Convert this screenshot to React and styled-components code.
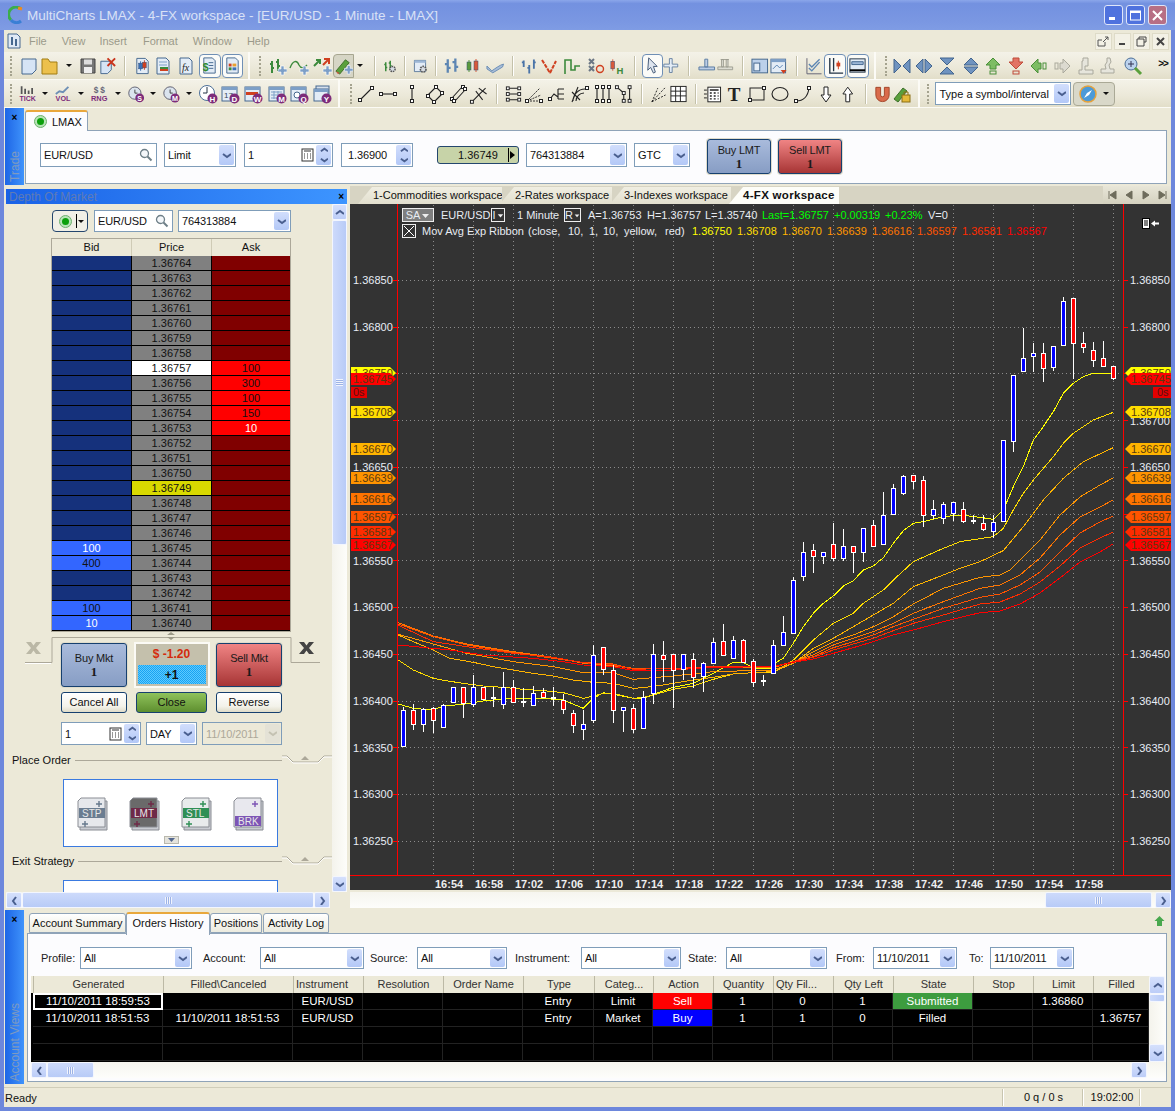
import React from 'react';
import styled, { createGlobalStyle } from 'styled-components';

const GlobalStyle = createGlobalStyle`
  html, body { margin: 0; padding: 0; background: #ece9d8; }
  body { font-family: 'Liberation Sans', Arial, sans-serif; font-size: 11px; color: #111; }
  * { box-sizing: border-box; }
`;

/* ---------- window frame ---------- */
const Win = styled.div` width: 1175px; height: 1111px; display: flex; flex-direction: column; overflow: hidden; `;
const TitleBar = styled.div` height: 30px; flex: none; display: flex; align-items: center; padding: 0 8px; color: #d9e1f6; font-size: 13.5px; background: linear-gradient(#8ba6ea, #7391e0 12%, #7a97e2 70%, #7f9ce4); `;
const TitleText = styled.span` margin-left: 3px; flex: 1; `;
const CapBtn = styled.div` width: 19px; height: 20px; margin-left: 3px; border: 1px solid #dfe6fa; border-radius: 3px; background: ${p => p.$red ? '#b76f85' : '#4f72de'}; display: flex; align-items: center; justify-content: center; `;
const Body = styled.div` flex: 1; display: flex; flex-direction: column; border: 4px solid #6d87dc; border-top: 0; min-height: 0; background: #ece9d8; `;

const MenuBar = styled.div` height: 22px; flex: none; display: flex; align-items: center; color: #9b9a8a; font-size: 11px; padding-left: 3px; `;
const MenuItem = styled.span` margin-left: ${p => p.$ml}px; `;
const MdiBtns = styled.div` margin-left: auto; margin-right: 2px; display: flex; gap: 2px; `;
const MdiBtn = styled.div` width: 17px; height: 17px; background: #f3f1e6; border: 1px solid #dedbc8; display: flex; align-items: center; justify-content: center; `;

const ToolRow = styled.div` height: 28px; flex: none; display: flex; align-items: center; background: linear-gradient(#f4f2e8, #ebe8d8 60%, #e2dec9); border-bottom: 1px solid #fbfaf4; `;
const Slot = styled.div` flex: none; height: 26px; display: flex; align-items: center; justify-content: center; `;
const ActiveBox = styled.div` width: 22px; height: 24px; border: 1px solid #6f8fb5; border-radius: 4px; background: #fbfbf8; display: flex; align-items: center; justify-content: center; `;
const PencilBox = styled.div` width: 21px; height: 24px; border: 1px solid #a7a690; border-radius: 4px 0 0 4px; background: #d6d5c5; display: flex; align-items: center; justify-content: center; `;
const Caret = styled.div` width: 0; height: 0; border-left: 3px solid transparent; border-right: 3px solid transparent; border-top: 3px solid #111; `;
const Sep = styled.div` width: 1px; height: 20px; background: #c4c1aa; box-shadow: 1px 0 #fff; `;
const Grip = styled.div` width: 2px; height: 20px; border-left: 2px dotted #a5a38f; `;
const EndBar = styled.div` width: 2px; height: 28px; background: #fcfbf6; `;
const Overflow = styled.div` font-size: 10px; font-weight: bold; letter-spacing: -1px; align-self: flex-start; margin-top: 5px; `;
const SymbolCombo = styled.div` width: 136px; height: 23px; margin-left: 4px; background: #fff; border: 1px solid #7f9db9; display: flex; align-items: center; padding-left: 4px; font-size: 11px; `;
const SymbolBtn = styled.div` width: 42px; height: 24px; margin-left: 2px; border: 1px solid #aaa996; border-radius: 4px; background: #d9d8c9; display: flex; align-items: center; justify-content: space-around; padding: 0 2px; `;

/* ---------- docks ---------- */
const Strip = styled.div` width: 19px; flex: none; margin-left: 1px; background: linear-gradient(90deg, #1e66e6, #3f93fb); color: #7f9ac0; display: flex; flex-direction: column; align-items: center; padding-top: 6px; `;
const StripClose = styled.div` color: #000; font-weight: bold; font-size: 10px; line-height: 8px; `;
const StripLabel = styled.div` margin-top: auto; margin-bottom: 3px; writing-mode: vertical-rl; transform: rotate(180deg); font-size: 12px; `;
const TradeDock = styled.div` height: 77px; flex: none; display: flex; `;
const TradeMain = styled.div` flex: 1; margin: 1px 4px 1px 1px; display: flex; flex-direction: column; `;
const TabRow = styled.div` display: flex; height: ${p => p.$h}px; align-items: flex-end; flex: none; padding-left: ${p => p.$pl || 0}px; `;
const LmaxTab = styled.div` width: 63px; height: 21px; margin-bottom: -1px; z-index: 1; background: #fcfcfe; border: 1px solid #8fa3b8; border-bottom: 0; border-top: 2px solid #e9a83c; border-radius: 3px 3px 0 0; display: flex; align-items: center; gap: 5px; padding-left: 8px; font-size: 11px; `;
const TradePanel = styled.div` flex: 1; background: #fcfcfe; border: 1px solid #8fa3b8; display: flex; align-items: flex-start; padding: 12px 0 0 14px; `;
const Field = styled.div` width: ${p => p.$w}px; height: ${p => p.$h || 24}px; margin-left: ${p => p.$ml || 0}px; flex: none; background: ${p => p.$off ? '#ece9d8' : '#fff'}; color: ${p => p.$off ? '#aca899' : '#111'}; border: 1px solid #7f9db9; display: flex; align-items: center; padding-left: 3px; overflow: hidden; font-size: 11px; letter-spacing: -.1px; `;
const FieldText = styled.span` flex: 1; white-space: nowrap; `;
const DropBtn = styled.div` width: 15px; align-self: stretch; margin: 1px; flex: none; background: ${p => p.$off ? '#e4e2d6' : 'linear-gradient(#d2defc, #b3c8f7)'}; border-radius: 2px; display: flex; align-items: center; justify-content: center; `;
const SpinBtn = styled.div` width: 15px; align-self: stretch; margin: 1px; flex: none; background: linear-gradient(#d2defc, #b3c8f7); border-radius: 2px; display: flex; flex-direction: column; align-items: center; justify-content: space-around; `;
const LastPrice = styled.div` width: 82px; height: 18px; margin: 3px 0 0 24px; flex: none; border: 1px solid #24466e; border-radius: 3px; background: #c7d3a8; display: flex; align-items: center; padding-left: 20px; font-size: 11px; `;
const LastPriceTail = styled.span` margin-left: auto; margin-right: 3px; border-left: 1px solid #000; padding-left: 1px; display: flex; align-items: center; height: 14px; `;
const SideBtn = styled.div` width: ${p => p.$w}px; height: ${p => p.$h}px; margin-left: ${p => p.$ml || 0}px; flex: none; margin-top: ${p => p.$mt || 0}px; border: 1px solid #16406f; border-radius: 3px; color: #1a1a1a; text-align: center; display: flex; flex-direction: column; justify-content: center; background: ${p => p.$sell ? 'linear-gradient(#f08484, #a73535)' : 'linear-gradient(#a9bbdc, #879dc4)'}; font-size: 11px; letter-spacing: -.2px; line-height: 14px; box-shadow: 0 0 0 1px #e0dccb; `;
const SideQty = styled.b` font-family: 'Liberation Serif', serif; font-size: 13px; `;

/* ---------- depth of market ---------- */
const Workspace = styled.div` height: 722px; flex: none; margin-top: 1px; display: flex; `;
const DomPanel = styled.div` width: 344px; flex: none; display: flex; flex-direction: column; padding: 3px 1px 0 2px; `;
const DomHead = styled.div` height: 15px; flex: none; background: linear-gradient(90deg, #1a62e6, #3d95ff); color: #5f7bb5; font-size: 12px; display: flex; align-items: center; justify-content: space-between; padding: 0 3px; `;
const DomRow = styled.div` flex: 1; display: flex; min-height: 0; `;
const DomContent = styled.div` width: 326px; flex: none; overflow: hidden; padding: 6px 0 0 46px; `;
const DomTop = styled.div` display: flex; width: 239px; height: 22px; `;
const ConnBtn = styled.div` width: 36px; height: 22px; border: 1px solid #24466e; border-radius: 4px; background: #f0efe6; display: flex; align-items: center; justify-content: space-between; padding: 0 3px 0 6px; `;
const ConnDivider = styled.div` display: flex; align-items: center; gap: 1px; border-left: 1px solid #000; height: 14px; padding-left: 1px; `;
const DomTable = styled.div` width: 240px; margin: 6px 0 0 -1px; border: 1px solid #aca899; background: #000; `;
const DomHeader = styled.div` height: 17px; display: grid; grid-template-columns: 79px 80px 79px; background: #ece9d8; text-align: center; line-height: 17px; font-size: 11px; border-bottom: 1px solid #ece9d8; `;
const DomHeaderCell = styled.div` border-left: ${p => p.$first ? 0 : '1px solid #cfcbb6'}; `;
const DomLine = styled.div` height: 15px; display: grid; grid-template-columns: 79px 80px 79px; border-bottom: 1px solid #000; `;
const DomCell = styled.div` background: ${p => p.$bg}; color: ${p => p.$fg || '#111'}; border-left: ${p => p.$first ? 0 : '1px solid #000'}; text-align: center; font-size: 11px; line-height: 14px; `;
const Tray = styled.div` position: relative; width: 239px; height: 55px; margin-top: 5px; padding: 5px 9px 0; display: flex; justify-content: space-between; `;
const TrayLine = styled.svg` position: absolute; left: -30px; top: -6px; `;
const TrayClose = styled.div` position: absolute; top: 5px; left: ${p => p.$left}px; line-height: 0; `;
const PnlBox = styled.div` position: relative; width: 76px; height: 46px; background: #c4c0ac; border: 2px solid #fbfaf5; display: flex; flex-direction: column; align-items: center; padding-top: 3px; `;
const PnlValue = styled.b` color: #d42a0c; font-size: 12px; line-height: 15px; `;
const PnlBar = styled.div` width: 68px; height: 19px; margin-top: 3px; text-align: center; font-weight: bold; font-size: 12px; line-height: 20px; background: repeating-conic-gradient(#19a3f2 0 25%, #5ccaff 0 50%) 0 0 / 2px 2px; `;
const ActionRow = styled.div` display: flex; width: 221px; margin-left: 9px; justify-content: space-between; `;
const ActionBtn = styled.div` width: ${p => p.$w}px; height: 21px; border: 1px solid #16406f; border-radius: 3px; text-align: center; line-height: 19px; font-size: 11px; background: ${p => p.$green ? 'linear-gradient(#8fc25b, #5e8f2f)' : 'linear-gradient(#fff, #f3f2ea 70%, #dfdcc8)'}; `;
const OrderRow = styled.div` display: flex; margin: 9px 0 0 9px; `;
const SectionTitle = styled.div` display: flex; align-items: center; margin: ${p => p.$mt}px 0 0 -40px; width: 320px; height: 14px; font-size: 11px; `;
const SectionRule = styled.div` flex: 1; height: 1px; margin-left: 4px; background: #aca899; `;
const OrderBox = styled.div` position: relative; width: 215px; height: ${p => p.$h}px; margin: ${p => p.$mt}px 0 0 11px; background: #fff; border: 1px solid #3a7ae0; display: flex; align-items: flex-start; padding: 17px 0 0 13px; gap: 20px; `;
const MoreBtn = styled.div` position: absolute; left: 100px; bottom: 2px; width: 15px; height: 8px; background: #e4e3dc; border: 1px solid #b9b8ad; display: flex; align-items: center; justify-content: center; `;

/* ---------- scroll bars ---------- */
const VScrollBar = styled.div` width: ${p => p.$w || 15}px; flex: none; display: flex; flex-direction: column; background: linear-gradient(90deg, #f4f3ec, #fdfdfa); `;
const HScrollBar = styled.div` height: 16px; flex: none; display: flex; width: ${p => p.$w ? p.$w + 'px' : 'auto'}; margin-top: ${p => p.$mt || 0}px; background: linear-gradient(#f6f5ef, #fdfdfb); `;
const ScrollBtn = styled.div` width: ${p => p.$w || 16}px; height: ${p => p.$h || 16}px; flex: none; margin-right: ${p => p.$mr || 0}px; background: linear-gradient(#d5e0fc, #bccdf8); border: 1px solid #f3f6fe; border-radius: 2px; display: flex; align-items: center; justify-content: center; `;
const Thumb = styled.div` background: linear-gradient(${p => p.$v ? '90deg' : '180deg'}, #cddafb, #b8cbf7); border: 1px solid #f3f6fe; border-radius: 2px; flex: ${p => p.$grow ? 1 : 'none'}; width: ${p => p.$w ? p.$w + 'px' : 'auto'}; height: ${p => p.$h ? p.$h + 'px' : 'auto'}; margin-left: ${p => p.$ml || 0}px; display: flex; align-items: center; justify-content: center; `;
const ThumbGrip = styled.div` width: 7px; height: 7px; background: ${p => p.$v ? 'repeating-linear-gradient(#f1f4fd 0 1px, #9db3e6 1px 2px)' : 'repeating-linear-gradient(90deg, #f1f4fd 0 1px, #9db3e6 1px 2px)'}; `;
const Fill = styled.div` flex: 1; `;

/* ---------- chart side ---------- */
const ChartCol = styled.div` width: 821px; margin-left: 2px; flex: none; display: flex; flex-direction: column; `;
const WsTabs = styled.div` height: 18px; flex: none; display: flex; align-items: flex-end; background: #d7d4c3; padding-left: 8px; `;
const WsTab = styled.div` width: ${p => p.$w}px; height: 17px; margin-right: -2px; flex: none; padding-left: ${p => p.$pl}px; line-height: 17px; white-space: nowrap; font-size: ${p => p.$on ? 11.5 : 11}px; letter-spacing: ${p => p.$on ? '.3px' : 0}; font-weight: ${p => p.$on ? 'bold' : 'normal'}; background: ${p => p.$on ? '#fdfdf8' : 'linear-gradient(#f0eee2, #e2dfce)'}; clip-path: polygon(14px 0, 100% 0, 100% 100%, 0 100%); z-index: ${p => p.$on ? 1 : 0}; `;
const WsNav = styled.div` margin-left: auto; width: 68px; height: 18px; display: flex; align-items: center; justify-content: space-around; background: linear-gradient(#e8e6d8, #d4d1bf); `;
const ChartFrame = styled.div` position: relative; height: 686px; flex: none; background: #333; `;
const ChartSvg = styled.svg` display: block; text { font-family: 'Liberation Sans', Arial, sans-serif; font-size: 11px; } `;
const Legend = styled.div` position: absolute; left: 52px; top: 4px; display: flex; flex-direction: column; gap: 2px; color: #e8ecf2; font-size: 11px; white-space: nowrap; `;
const LegendLine = styled.div` display: flex; align-items: center; height: 14px; `;
const LegendBox = styled.span` display: inline-flex; align-items: center; justify-content: center; gap: 1px; height: 14px; width: ${p => p.$w}px; flex: none; margin: ${p => p.$m || 0}; border: 1px solid #eee; background: ${p => p.$gray ? '#7f7f7f' : 'transparent'}; `;
const LegendText = styled.span` color: ${p => p.$c || '#e8ecf2'}; width: ${p => p.$w ? p.$w + 'px' : 'auto'}; flex: none; `;
const CollapseIcon = styled.div` position: absolute; right: 11px; top: 14px; `;

/* ---------- account views ---------- */
const AccountDock = styled.div` height: 174px; flex: none; margin-top: 2px; display: flex; `;
const AccountMain = styled.div` flex: 1; margin: 0 4px 2px 3px; display: flex; flex-direction: column; `;
const AccTab = styled.div` width: ${p => p.$w}px; height: ${p => p.$on ? 23 : 20}px; margin-bottom: ${p => p.$on ? -2 : 0}px; margin-left: ${p => p.$ml || 0}px; flex: none; border: 1px solid #8fa3b8; border-bottom: ${p => p.$on ? 0 : '1px solid #8fa3b8'}; border-top: ${p => p.$on ? '2px solid #e9a83c' : '1px solid #8fa3b8'}; border-radius: 3px 3px 0 0; background: ${p => p.$on ? '#fcfcfe' : 'linear-gradient(#fff, #ecebdf)'}; text-align: center; line-height: 19px; font-size: 11px; z-index: ${p => p.$on ? 1 : 0}; `;
const UpArrow = styled.div` margin-left: auto; margin-right: 2px; align-self: center; `;
const AccPanel = styled.div` flex: 1; background: #fcfcfe; border: 1px solid #8fa3b8; display: flex; flex-direction: column; padding: 13px 0 0 3px; min-height: 0; `;
const FilterRow = styled.div` display: flex; align-items: center; height: 22px; flex: none; color: #222; `;
const FilterLabel = styled.span` width: ${p => p.$w}px; flex: none; padding-left: ${p => p.$pl || 0}px; font-size: 11px; white-space: nowrap; `;
const GridWrap = styled.div` display: flex; margin-top: 7px; height: 86px; flex: none; --cols: 130px 130px 70px 80px 80px 71px 59px 60px 60px 60px 60px 80px 60px 60px 56px; `;
const Grid = styled.div` width: 1118px; flex: none; background: #000; `;
const GridHead = styled.div` height: 17px; display: grid; grid-template-columns: var(--cols); padding-left: 2px; background: #ece9d8; line-height: 17px; font-size: 11px; color: #333; `;
const HeadCell = styled.div` border-left: 1px solid #bcb9a5; text-align: ${p => p.$left ? 'left' : 'center'}; padding-left: ${p => p.$left ? 2 : 0}px; white-space: nowrap; overflow: hidden; `;
const GridRow = styled.div` height: 17px; display: grid; grid-template-columns: var(--cols); padding-left: 2px; `;
const GridCell = styled.div` border: ${p => p.$sel ? '2px solid #fff' : 0}; border-right: ${p => p.$sel ? '2px solid #fff' : '1px solid #222'}; border-bottom: ${p => p.$sel ? '2px solid #fff' : '1px solid #222'}; background: ${p => p.$bg || '#000'}; color: #fff; text-align: center; font-size: 11.5px; line-height: ${p => p.$sel ? 13 : 16}px; white-space: nowrap; `;

/* ---------- status bar ---------- */
const StatusBar = styled.div` height: 20px; flex: none; margin-top: 3px; display: flex; align-items: center; font-size: 11px; border-top: 1px solid #d0cdb9; background: #ece9d8; `;
const StatusCell = styled.div` height: 17px; border-left: 1px solid #fff; box-shadow: -1px 0 #c8c5b0; width: ${p => p.$w}px; text-align: center; line-height: 17px; flex: none; `;

/* ---------- icons ---------- */
const S = '#46688f';
const LABEL = { fontSize: 8, fontWeight: 'bold', fontFamily: 'Liberation Sans' };
const Page = () => <path d="M4 2h9l3 3v13H4z" fill="#e3ecf6" stroke={S} />;
const Ball = ({ l }) => (<g><circle cx="14.5" cy="14.5" r="5" fill="#7d2c7a" /><text x="14.5" y="17.5" textAnchor="middle" fill="#fff" style={LABEL}>{l}</text></g>);
const Plus = () => <path d="M14 10h3v3h3v3h-3v3h-3v-3h-3v-3h3z" fill="#7d9fc7" stroke="#fff" strokeWidth=".6" />;
const Gear = () => <circle cx="14" cy="14" r="3.5" fill="#d8dde3" stroke="#555" strokeWidth="2" strokeDasharray="2 1" />;
const Cnd = ({ x, t, b, c }) => (<g><path d={`M${x} ${t - 2}V${b + 2}`} stroke={c} /><rect x={x - 2} y={t} width="4" height={b - t} fill={c} stroke="#33507a" strokeWidth=".5" /></g>);
const Seg = ({ d }) => <path d={d} fill="none" stroke="#222" strokeWidth="1.1" />;
const Dot = ({ x, y }) => <rect x={x - 1.5} y={y - 1.5} width="3" height="3" fill="#fff" stroke="#222" />;
const Tri = ({ d, c }) => <path d={d} fill={c} stroke="#43658e" />;
const Bars3 = ({ c = S }) => <path d="M5 5v12M3 8h2M5 12h2M11 3v12M9 6h2M11 10h2" fill="none" stroke={c} strokeWidth="2" />;
const Lbl = ({ t }) => (<g><path d="M3 1v9M7 4v6M11 6v4M15 3v7" stroke="#555" strokeWidth="2" /><text x="10" y="18" textAnchor="middle" fill="#7d2c7a" style={LABEL}>{t}</text></g>);
const CalBase = () => <g><rect x="2" y="3" width="15" height="14" fill="#e3ecf6" stroke={S} /><path d="M2 3h15v3H2z" fill="#7d9fc7" /></g>;

const ICONS = {
  newWin: <path d="M3 3h14v11l-4 4H3z" fill="#d6e4f5" stroke={S} />,
  open: <path d="M3 3h6l2 3h7v12H3z" fill="#ecc04c" stroke="#a17d12" />,
  save: <g><path d="M3 3h14v14H3z" fill="#777" stroke="#444" /><rect x="6" y="3.5" width="8" height="5" fill="#ddd" /><rect x="6" y="11" width="8" height="6" fill="#eee" /></g>,
  del: <g><path d="M3 5h11v9l-4 4H3z" fill="#d6e4f5" stroke={S} /><path d="M10 2l8 8M18 2l-8 8" stroke="#c9341c" strokeWidth="2" /></g>,
  chartDoc: <g><Page /><Cnd x={8} t={7} b={13} c="#3a6fb5" /><Cnd x={12} t={6} b={12} c="#d04020" /></g>,
  gridDoc: <g><Page /><path d="M6 6h8M6 9h8" stroke="#7d9fc7" /><rect x="7" y="11" width="8" height="2" fill="#3c8a3c" /><rect x="7" y="13" width="8" height="2" fill="#d04020" /></g>,
  fx: <g><Page /><text x="6" y="15" fill="#222" style={{ fontSize: 10, fontStyle: 'italic', fontFamily: 'Liberation Serif' }}>fx</text></g>,
  dollarDoc: <g><Page /><path d="M9 7h5M9 10h5M9 13h5" stroke={S} /><text x="3" y="16" fill="#2f8a2f" style={{ fontSize: 11, fontWeight: 'bold', fontFamily: 'Liberation Sans' }}>$</text></g>,
  tableDoc: <g><Page /><path d="M6 8h3v3H6z" fill="#d04020" /><path d="M10 8h4v3h-4z" fill="#e8a030" /><path d="M6 12h3v3H6z" fill="#3c8a3c" /><path d="M10 12h4v3h-4z" fill="#3a6fb5" /></g>,
  addBars: <g><Bars3 c="#3c8a3c" /><Plus /></g>,
  addWave: <g><path d="M1 12c3-8 7-8 9-3 2 4 5 3 8 0" fill="none" stroke="#3c8a3c" strokeWidth="1.4" /><Plus /></g>,
  addArrow: <g><path d="M2 10l5-5M4 4h4v4" fill="none" stroke="#3c8a3c" strokeWidth="2" /><path d="M11 9l5-5M12 3h5v5" fill="none" stroke="#d04020" strokeWidth="2" /><Plus /></g>,
  pencilPlus: <g><path d="M2 16l10-12 4 3-10 12z" fill="#5aa03c" stroke="#3d6f2a" /><path d="M2 16l2 3 2-1z" fill="#d0503c" /><Plus /></g>,
  gearBars: <g><Bars3 c="#3c8a3c" /><Gear /></g>,
  gearWin: <g><path d="M3 3h14v14H3z" fill="#e3ecf6" stroke={S} /><path d="M3 3h14v3H3z" fill="#9db7d6" /><Gear /></g>,
  bars: <path d="M5 3v14M2 8h3M5 12h3M13 2v14M10 6h3M13 11h3" fill="none" stroke="#5d86b3" strokeWidth="2.4" />,
  candles: <g><Cnd x={6} t={6} b={14} c="#5a9a3c" /><Cnd x={13} t={5} b={14} c="#d85a3c" /></g>,
  check: <path d="M2 10l5 5c3-2 8-6 12-7l-1 3-10 6-6-4z" fill="#a8bdd8" stroke="#6d8fb5" />,
  hlcBlue: <path d="M4 4v7M10 9v9M15 3v10M2 6h2M8 12h2M15 6h2" fill="none" stroke="#4a74a8" strokeWidth="2" />,
  hlcRed: <path d="M3 4l5 8 3 5M11 17l6-12" fill="none" stroke="#d04020" strokeWidth="2" strokeDasharray="4 1" />,
  hlcGreen: <path d="M3 18V4h6v10h4v-4h5" fill="none" stroke="#3c8a3c" strokeWidth="1.6" />,
  pf: <g><path d="M3 3l5 5M8 3l-5 5M3 10l5 5M8 10l-5 5" stroke="#6b7684" strokeWidth="2" /><circle cx="14" cy="13" r="3.5" fill="none" stroke="#d04020" strokeWidth="1.4" /></g>,
  candleH: <g><Cnd x={5} t={5} b={13} c="#d85a3c" /><text x="9" y="18" fill="#3c8a3c" style={{ fontSize: 10, fontWeight: 'bold', fontFamily: 'Liberation Sans' }}>H</text></g>,
  cursor: <path d="M6 2l9 9h-4l2 6-2 1-3-6-3 3z" fill="#dde4ee" stroke="#455b78" />,
  cross: <path d="M8 2h3v6h6v3h-6v6H8v-6H2V8h6z" fill="#e3ecf6" stroke="#65809f" />,
  hline: <path d="M2 11h16v3H2zM8 3h3v8H8z" fill="#bccde5" stroke="#5d7da3" />,
  hlineG: <path d="M2 11h16v3H2zM6 3h2v8H6zM11 3h2v8h-2zM5 3h9" fill="#dcdcd2" stroke="#9c9c90" />,
  panel: <g><rect x="2" y="3" width="16" height="14" fill="#bcd0ea" stroke={S} /><rect x="4" y="7" width="6" height="8" fill="#e7eff8" stroke={S} /></g>,
  chartWin: <g><CalBase /><path d="M4 13l4-4 3 3 3-3" fill="none" stroke="#5c86b3" /><path d="M12 14l6 0-3 4z" fill="#d04020" /></g>,
  checkChart: <g><path d="M3 2v16h15" fill="none" stroke="#667" /><path d="M5 12l3 3 8-9M5 8l3 3 8-8" fill="none" stroke="#5d86b3" strokeWidth="1.4" /></g>,
  axisCandle: <g><path d="M4 2v16h14M8 2v14" fill="none" stroke="#234" strokeWidth="1.4" /><path d="M13 5v9" stroke="#d04020" /><rect x="11" y="7" width="4" height="4" fill="#d04020" /></g>,
  panelStack: <g><rect x="2" y="3" width="16" height="14" fill="#e3ecf6" stroke="#234" /><path d="M4 6h12v3H4z" fill="#9db7d6" stroke={S} /><path d="M2 15h16" stroke="#000" strokeWidth="2" /></g>,
  stepStart: <g><Tri d="M2 3l7 7-7 7z" c="#6f93c0" /><Tri d="M18 3l-7 7 7 7z" c="#6f93c0" /></g>,
  stepIn: <g><Tri d="M9 3l-7 7 7 7z" c="#6f93c0" /><Tri d="M11 3l7 7-7 7z" c="#6f93c0" /></g>,
  stepV: <g><Tri d="M3 2h14l-7 7z" c="#6f93c0" /><Tri d="M3 18h14l-7-7z" c="#6f93c0" /></g>,
  stepV2: <g><Tri d="M10 2l7 7H3z" c="#6f93c0" /><Tri d="M10 18l7-7H3z" c="#6f93c0" /></g>,
  upG: <g><path d="M10 2l7 7h-4v4H7V9H3z" fill="#7dbd63" stroke="#4b8f3a" /><rect x="7" y="15" width="6" height="3" fill="none" stroke="#4b8f3a" /></g>,
  downR: <g><path d="M10 13l7-7h-4V2H7v4H3z" fill="#e27364" stroke="#bf4a38" /><rect x="7" y="15" width="6" height="3" fill="none" stroke="#bf4a38" /></g>,
  leftG: <g><path d="M2 10l7-7v4h3v6H9v4z" fill="#7dbd63" stroke="#4b8f3a" /><rect x="14" y="7" width="3" height="6" fill="none" stroke="#4b8f3a" /></g>,
  rightG: <g><path d="M18 10l-7-7v4H8v6h3v4z" fill="#dcdad0" stroke="#aaa99c" /><rect x="3" y="7" width="3" height="6" fill="none" stroke="#aaa99c" /></g>,
  jumpG: <path d="M7 2h5v8h-3v4h8v4H3v-4h3V5H7z" fill="#e6e5dc" stroke="#a9a89c" />,
  jumpG2: <path d="M9 2h3l1 4-2 3 1 4h4v4H3v-4h5l-1-4 2-3z" fill="#e6e5dc" stroke="#a9a89c" />,
  zoom: <g><circle cx="8" cy="8" r="6" fill="#bcd3ee" stroke="#4c6f98" /><path d="M5 8h6M8 5v6" stroke="#335" /><path d="M12 12l6 6" stroke="#5aa03c" strokeWidth="3" /></g>,
  tick: <Lbl t="TICK" />,
  vol: <g><path d="M2 10l4-3 4 1 6-6" fill="none" stroke="#6d8fb5" strokeWidth="2" /><text x="10" y="18" textAnchor="middle" fill="#7d2c7a" style={LABEL}>VOL</text></g>,
  rng: <g><text x="4" y="9" fill="#667" style={{ fontSize: 9, fontWeight: 'bold', fontFamily: 'Liberation Sans' }}>$</text><text x="11" y="9" fill="#667" style={{ fontSize: 9, fontWeight: 'bold', fontFamily: 'Liberation Sans' }}>$</text><text x="10" y="18" textAnchor="middle" fill="#7d2c7a" style={LABEL}>RNG</text></g>,
  clockS: <g><circle cx="9" cy="9" r="7" fill="#dbe4ee" stroke="#556" /><path d="M9 5v4h3" stroke="#333" fill="none" /><Ball l="S" /></g>,
  clockM: <g><circle cx="9" cy="9" r="7" fill="#dbe4ee" stroke="#556" /><path d="M9 5v4h3" stroke="#333" fill="none" /><Ball l="M" /></g>,
  clockH: <g><circle cx="9" cy="9" r="7.5" fill="#fff" stroke="#4c6f98" /><path d="M9 3v6H5" stroke="#234" fill="none" /><Ball l="H" /></g>,
  calD: <g><CalBase /><text x="4" y="14" fill="#345" style={{ fontSize: 8, fontFamily: 'Liberation Sans' }}>17</text><Ball l="D" /></g>,
  calW: <g><CalBase /><rect x="3" y="8" width="12" height="3" fill="#d04020" /><Ball l="W" /></g>,
  calM: <g><CalBase /><path d="M4 8h11M4 11h11M4 14h8M7 7v8M11 7v8" stroke="#7d9fc7" /><Ball l="M" /></g>,
  calQ: <g><CalBase /><circle cx="8" cy="11" r="3" fill="#fff" stroke={S} /><Ball l="Q" /></g>,
  calY: <g><rect x="4" y="2" width="13" height="12" fill="#d6e0ec" stroke={S} /><rect x="2" y="5" width="14" height="12" fill="#e3ecf6" stroke={S} /><path d="M2 5h14v3H2z" fill="#7d9fc7" /><Ball l="Y" /></g>,
  line: <g><Seg d="M4 16L16 4" /><Dot x={4} y={16} /><Dot x={16} y={4} /></g>,
  ray: <g><Seg d="M3 10h14" /><Dot x={3} y={10} /><Dot x={17} y={10} /></g>,
  vline: <g><Seg d="M10 3v14" /><Dot x={10} y={3} /><Dot x={10} y={17} /></g>,
  channel: <g><Seg d="M2 12L11 3M9 18l9-9M3 12l6 6M11 3l6 6" /><Dot x={3} y={12} /><Dot x={11} y={3} /><Dot x={9} y={18} /><Dot x={17} y={9} /></g>,
  channel2: <g><Seg d="M4 14L14 3M7 17L17 6" /><Dot x={4} y={15} /><Dot x={15} y={3} /><Dot x={6} y={17} /><Dot x={17} y={5} /></g>,
  fork: <g><Seg d="M3 18L10 11M10 11l7-7M7 7l7 9M10 4l8 6" /><Dot x={3} y={18} /></g>,
  levels: <g><Seg d="M4 4h12M4 10h12M4 16h12" /><Dot x={4} y={4} /><Dot x={16} y={4} /><Dot x={4} y={10} /><Dot x={16} y={10} /><Dot x={4} y={16} /><Dot x={16} y={16} /></g>,
  fan: <g><path d="M3 17L16 4M3 17l14-6M3 17h15" fill="none" stroke="#333" strokeDasharray="2 1" /><Dot x={3} y={17} /><Dot x={17} y={17} /></g>,
  fibExt: <g><Seg d="M3 15l4-5 4 3M11 5h6M11 10h6M11 15h6M11 5v10" /><Dot x={3} y={15} /></g>,
  arcs: <g><Seg d="M3 17A12 12 0 0 1 15 5M6 17A8 8 0 0 1 14 9M2 8l8 8M8 3l-6 15" /><Dot x={17} y={4} /></g>,
  triple: <g><Seg d="M4 3v14M10 3v14M16 3v14" /><Dot x={4} y={3} /><Dot x={10} y={3} /><Dot x={16} y={3} /><Dot x={4} y={17} /><Dot x={10} y={17} /><Dot x={16} y={17} /></g>,
  triple2: <g><Seg d="M3 3l7 6M10 9v8M16 3v14" /><Dot x={3} y={3} /><Dot x={10} y={9} /><Dot x={16} y={3} /><Dot x={10} y={17} /><Dot x={16} y={17} /></g>,
  dashFan: <path d="M3 18L17 3M3 18l6-14M3 18l14-7" fill="none" stroke="#222" strokeDasharray="2 1.5" />,
  hash: <g><rect x="2" y="2" width="16" height="16" fill="#fff" stroke="#222" /><path d="M7 2v16M12 2v16M2 7h16M2 12h16" stroke="#222" /></g>,
  calc: <g><path d="M1 6h3M1 10h3M1 14h3" stroke="#222" /><rect x="5" y="3" width="13" height="15" fill="#fff" stroke="#222" /><path d="M7 6h9M7 9h2M11 9h2M15 9h1M7 12h2M11 12h2M15 12h1M7 15h2M11 15h2M15 15h1" stroke="#222" strokeWidth="1.5" /></g>,
  textT: <text x="10" y="17" textAnchor="middle" fill="#222" style={{ fontSize: 19, fontWeight: 'bold', fontFamily: 'Liberation Serif' }}>T</text>,
  rect: <g><rect x="3" y="4" width="14" height="12" fill="none" stroke="#222" /><Dot x={3} y={16} /><Dot x={17} y={4} /></g>,
  oval: <ellipse cx="10" cy="10" rx="8" ry="6.5" fill="none" stroke="#222" strokeWidth="1.1" />,
  curve: <g><Seg d="M3 17c8 0 12-5 13-13" /><Dot x={3} y={17} /><Dot x={16} y={4} /></g>,
  arrowD: <path d="M8 3h4v8h3l-5 7-5-7h3z" fill="#fff" stroke="#222" />,
  arrowU: <path d="M8 18h4v-8h3l-5-7-5 7h3z" fill="#fff" stroke="#222" />,
  magnet: <path d="M3 3h5v8a2 2 0 0 0 4 0V3h5v8a7 7 0 0 1-14 0z" fill="#d96b4b" stroke="#a24428" />,
  pencilLock: <g><path d="M2 15l9-11 4 3-9 11z" fill="#5aa03c" stroke="#3d6f2a" /><rect x="10" y="11" width="8" height="7" fill="#e5b93a" stroke="#8a6f14" /><path d="M12 11V8h4v3" fill="none" stroke="#8a6f14" /></g>,
};

const Ico = ({ name, size = 20 }) => <svg width={size} height={size} viewBox="0 0 20 20">{ICONS[name]}</svg>;
const Chev = ({ d = 'down', c = '#4a5f8f', s = 9 }) => {
  const paths = { down: 'M1 3l4 3 4-3', up: 'M1 6l4-3 4 3', left: 'M6 1L3 5l3 4', right: 'M3 1l3 4-3 4' };
  return <svg width={s} height={s} viewBox="0 0 9 9"><path d={paths[d]} fill="none" stroke={c} strokeWidth="2" /></svg>;
};
const Magnifier = () => <svg width="14" height="14" viewBox="0 0 14 14"><circle cx="5.5" cy="5.5" r="4" fill="#f4f7fa" stroke="#6e7f88" strokeWidth="1.3" /><path d="M8.5 8.5l4 4" stroke="#6e7f88" strokeWidth="2" /></svg>;
const CalcIcon = () => <svg width="14" height="14" viewBox="0 0 14 14"><rect x="1" y="1" width="11" height="12" fill="#fff" stroke="#333" /><path d="M3 3h7M3 6h1M6 6h1M9 6h1M3 8h1M6 8h1M9 8h1M3 10h1M6 10h1M9 10h1" stroke="#333" strokeWidth="1.2" /></svg>;
const Led = () => <svg width="13" height="13" viewBox="0 0 13 13"><circle cx="6.5" cy="6.5" r="6" fill="#b8e4b8" stroke="#6eb06e" /><circle cx="6.5" cy="6.5" r="3.5" fill="#0ba00b" /></svg>;
const XMark = ({ c }) => <svg width="15" height="12" viewBox="0 0 15 12"><path d="M0 0h5l2.500 3.500 2.500-3.500h5l-5 6 5 6h-5l-2.500-3.500-2.500 3.500h-5l5-6z" fill={c} /></svg>;
const TinyDrop = ({ s = 7 }) => <svg width={s} height={s} viewBox="0 0 9 9"><path d="M1 3h7L4.500 7z" fill="#eee" /></svg>;

const Spin = () => <SpinBtn><Chev d="up" s={8} /><Chev d="down" s={8} /></SpinBtn>;
const Drop = ({ off }) => <DropBtn $off={off}><Chev c={off ? '#c4c2b2' : '#4a5f8f'} /></DropBtn>;

/* toolbars: each entry is [icon, centre x]; slot widths come from the centres */
const tb1 = [['grip', 9], ['newWin', 27], ['open', 51], ['caret', 68], ['save', 87], ['del', 109], ['sep', 125], ['chartDoc', 140], ['gridDoc', 163], ['fx', 186], ['dollarDoc', 210, 'on'], ['tableDoc', 233, 'on'], ['end', 252], ['grip', 257], ['addBars', 275], ['addWave', 299], ['addArrow', 322], ['pencilPlus', 346, 'pen'], ['caret', 361], ['sep', 373], ['gearBars', 390], ['sep', 403], ['gearWin', 420], ['sep', 435], ['bars', 450], ['candles', 473], ['check', 497], ['sep', 512], ['hlcBlue', 527], ['hlcRed', 549], ['hlcGreen', 572], ['pf', 596], ['candleH', 619], ['sep', 634], ['cursor', 651, 'on'], ['cross', 673], ['sep', 688], ['hline', 705], ['hlineG', 727], ['sep', 742], ['panel', 757], ['chartWin', 781], ['sep', 796], ['checkChart', 812], ['axisCandle', 835, 'on'], ['panelStack', 859, 'on'], ['end', 878], ['grip', 883], ['stepStart', 901], ['stepIn', 924], ['stepV', 947], ['stepV2', 971], ['upG', 993], ['downR', 1016], ['leftG', 1038], ['rightG', 1062], ['jumpG', 1086], ['jumpG2', 1108], ['zoom', 1131], ['over', 1163]];
const tb2 = [['grip', 9], ['tick', 28], ['caret', 44], ['vol', 64], ['caret', 80], ['rng', 100], ['caret', 117], ['clockS', 136], ['caret', 152], ['clockM', 171], ['caret', 188], ['clockH', 207], ['calD', 230], ['calW', 253], ['calM', 277], ['calQ', 299], ['calY', 322], ['end', 343], ['grip', 347], ['line', 365], ['ray', 388], ['vline', 412], ['channel', 435], ['channel2', 457], ['fork', 481], ['sep', 496], ['levels', 511], ['fan', 534], ['fibExt', 557], ['arcs', 581], ['triple', 602], ['triple2', 626], ['sep', 641], ['dashFan', 657], ['hash', 680], ['sep', 695], ['calc', 711], ['textT', 734], ['rect', 757], ['oval', 780], ['curve', 803], ['arrowD', 826], ['arrowU', 850], ['sep', 865], ['magnet', 880], ['pencilLock', 903], ['end', 923], ['grip', 928]];

const slotWidths = (items, start) => items.map((it, i) => {
  const left = i === 0 ? start : (items[i - 1][1] + it[1]) / 2;
  const right = i === items.length - 1 ? it[1] + (it[1] - left) : (it[1] + items[i + 1][1]) / 2;
  return right - left;
});

const ToolItem = ({ item }) => {
  const [n, , mode] = item;
  if (n === 'grip') return <Grip />;
  if (n === 'sep') return <Sep />;
  if (n === 'end') return <EndBar />;
  if (n === 'caret') return <Caret />;
  if (n === 'over') return <Overflow>&gt;&gt;</Overflow>;
  if (mode === 'on') return <ActiveBox><Ico name={n} size={19} /></ActiveBox>;
  if (mode === 'pen') return <PencilBox><Ico name={n} size={19} /></PencilBox>;
  return <Ico name={n} />;
};

const Toolbar = ({ items, children }) => {
  const widths = slotWidths(items, 4);
  return (
    <ToolRow>
      {items.map((it, i) => <Slot key={i} style={{ width: widths[i] }}><ToolItem item={it} /></Slot>)}
      {children}
    </ToolRow>
  );
};

/* ---------- data ---------- */
const ASKS = { 1.36757: ['100'], 1.36756: ['300'], 1.36755: ['100'], 1.36754: ['150'], 1.36753: ['10', '#fff'] };
const BIDS = { 1.36745: ['100', '#fff'], 1.36744: ['400'], 1.36741: ['100'], 1.36740: ['10', '#fff'] };
const domRows = Array.from({ length: 25 }, (_, i) => +(1.36764 - i * 0.00001).toFixed(5));

const HEADS = [['Generated'], ['Filled\\Canceled'], ['Instrument', 1], ['Resolution'], ['Order Name'], ['Type'], ['Categ...'], ['Action'], ['Quantity'], ['Qty Fil...', 1], ['Qty Left'], ['State'], ['Stop'], ['Limit'], ['Filled']];
const ORDERS = [
  ['11/10/2011 18:59:53', '', 'EUR/USD', '', '', 'Entry', 'Limit', 'Sell', '1', '0', '1', 'Submitted', '', '1.36860', ''],
  ['11/10/2011 18:51:53', '11/10/2011 18:51:53', 'EUR/USD', '', '', 'Entry', 'Market', 'Buy', '1', '1', '0', 'Filled', '', '', '1.36757'],
  Array(15).fill(''), Array(15).fill(''),
];
const cellBg = v => ({ Sell: '#ff0000', Buy: '#0000ff', Submitted: '#3d9c3f' }[v]);

const GRID_Y = [280, 327, 373.7, 420.5, 467, 514, 560.5, 607, 654, 701, 747.5, 794, 841];
const PRICES = ['1.36850', '1.36800', null, null, '1.36650', null, '1.36550', '1.36500', '1.36450', '1.36400', '1.36350', '1.36300', '1.36250'];
const TIMES = ['16:54', '16:58', '17:02', '17:06', '17:10', '17:14', '17:18', '17:22', '17:26', '17:30', '17:34', '17:38', '17:42', '17:46', '17:50', '17:54', '17:58'];

// [kind, wick top, body top, body bottom, wick bottom], read off enlarged crops
const z = (base, rows) => rows.map(r => [r[0], ...r.slice(1).map(v => base + v / 3)]);
const CANDLES = [
  ...z(600, [['b', 320, 330, 440, 440], ['r', 312, 332, 374, 390], ['b', 325, 328, 374, 395], ['r', 322, 325, 362, 398], ['b', 312, 316, 382, 382], ['b', 262, 262, 308, 308], ['r', 262, 262, 310, 354], ['b', 226, 262, 314, 322], ['r', 262, 262, 298, 298], ['w', 262, 292, 298, 320], ['b', 216, 262, 312, 326], ['r', 240, 262, 308, 308], ['w', 264, 304, 306, 322], ['b', 258, 280, 317, 317], ['r', 264, 278, 292, 292], ['w', 262, 292, 294, 318], ['r', 282, 300, 328, 342], ['r', 330, 340, 376, 398], ['b', 330, 373, 388, 420], ['b', 135, 166, 360, 370], ['r', 142, 142, 208, 224], ['r', 195, 212, 332, 368], ['b', 322, 322, 332, 395], ['r', 312, 325, 388, 398], ['b', 272, 292, 385, 385], ['b', 132, 163, 280, 312], ['r', 123, 166, 178, 245], ['r', 163, 163, 210, 324], ['b', 163, 163, 208, 240], ['r', 160, 178, 232, 263], ['b', 185, 190, 230, 275], ['b', 114, 127, 190, 190], ['r', 72, 124, 165, 165], ['b', 108, 121, 176, 176], ['r', 118, 121, 188, 188], ['r', 178, 184, 247, 262]]),
  ...z(460, [['w', 645, 660, 667, 678], ['b', 540, 556, 640, 640], ['b', 468, 517, 556, 556], ['b', 352, 361, 520, 520], ['b', 246, 277, 350, 362], ['r', 252, 271, 290, 338], ['b', 277, 277, 290, 312], ['r', 190, 253, 296, 302], ['b', 207, 259, 296, 302], ['r', 259, 259, 277, 338], ['b', 205, 205, 277, 305], ['r', 180, 196, 260, 262], ['b', 97, 166, 253, 253], ['b', 72, 85, 163, 163], ['b', 46, 49, 101, 105], ['r', 46, 46, 65, 87], ['r', 48, 61, 166, 200], ['b', 120, 148, 166, 178], ['b', 127, 133, 176, 191], ['b', 127, 127, 161, 183], ['r', 127, 148, 184, 188], ['w', 166, 181, 184, 193]]),
  ...z(280, [['r', 705, 730, 748, 752], ['b', 705, 727, 753, 775], ['b', 482, 482, 724, 724], ['b', 286, 286, 484, 515], ['b', 145, 236, 274, 274], ['b', 190, 221, 229, 275], ['r', 190, 221, 265, 305], ['b', 199, 199, 262, 272], ['b', 52, 64, 196, 196], ['r', 56, 56, 190, 298], ['r', 156, 190, 202, 220], ['r', 186, 212, 240, 260], ['r', 183, 236, 260, 260], ['r', 259, 259, 295, 300]]),
];

const pts9 = a => a.map(([x, y]) => [350 + x / 3, 600 + y / 3]);
const pts10 = a => a.map(([x, y]) => [760 + x / 3, 460 + y / 3]);
const pts8 = a => a.map(([x, y]) => [960 + x / 3, 280 + y / 3]);
const RIBBON = [
  ['#ffff00', [...pts9([[145, 312], [190, 325], [250, 330], [280, 318], [340, 313], [400, 303], [460, 297], [520, 296], [580, 295], [640, 300], [700, 325], [730, 295], [760, 278], [800, 285], [850, 295], [880, 296], [910, 283], [970, 262], [1030, 250], [1090, 220], [1150, 187], [1180, 187], [1210, 205], [1270, 205]]), ...pts10([[40, 612], [70, 595], [100, 550], [130, 500], [160, 460], [190, 430], [220, 408], [250, 378], [280, 362], [310, 330], [340, 318], [370, 293], [400, 250], [430, 212], [460, 190], [490, 185], [550, 170], [600, 165], [660, 172]]), ...pts8([[100, 718], [130, 690], [160, 620], [190, 560], [220, 480], [250, 440], [280, 395], [310, 340], [340, 310], [370, 290], [400, 280], [460, 280]])]],
  ['#ffdd00', [...pts9([[145, 180], [190, 210], [250, 235], [280, 241], [340, 250], [400, 258], [460, 262], [520, 268], [580, 272], [640, 278], [700, 295], [760, 280], [800, 283], [850, 295], [880, 292], [910, 285], [970, 268], [1030, 258], [1090, 238], [1150, 222], [1210, 218], [1270, 218]]), ...pts10([[100, 600], [160, 540], [220, 490], [280, 460], [310, 430], [340, 410], [370, 390], [400, 360], [460, 305], [550, 265], [600, 245]]), ...pts8([[100, 770], [130, 745], [160, 690], [190, 640], [220, 600], [250, 565], [280, 530], [310, 490], [340, 460], [400, 420], [460, 397]])]],
  ['#ffb400', [...pts9([[145, 105], [190, 125], [250, 150], [300, 175], [370, 187], [430, 200], [490, 210], [550, 220], [610, 228], [670, 240], [730, 247], [790, 250], [850, 265], [880, 263], [940, 255], [1030, 240], [1090, 232], [1150, 222], [1210, 218], [1270, 215]]), ...pts10([[100, 610], [160, 565], [220, 535], [280, 500], [340, 465], [400, 430], [460, 380], [550, 345], [600, 325], [660, 305]]), ...pts8([[130, 812], [190, 740], [250, 660], [310, 595], [370, 545], [460, 503]])]],
  ['#ff9400', [...pts9([[145, 103], [250, 132], [350, 160], [490, 185], [610, 200], [700, 218], [790, 218], [850, 238], [970, 228], [1090, 215], [1270, 210]]), ...pts10([[100, 610], [160, 575], [220, 545], [280, 525], [340, 500], [400, 470], [460, 432], [550, 385], [660, 352]]), [1000, 575], [1010, 570], [1020, 560], [1040, 540], [1060, 515], [1080, 497], [1100, 485], [1113, 478]]],
  ['#ff7400', [...pts9([[145, 68], [250, 108], [350, 132], [490, 155], [610, 172], [700, 190], [790, 198], [850, 205], [970, 207], [1090, 203], [1270, 203]]), ...pts10([[100, 605], [160, 585], [220, 555], [280, 535], [340, 515], [400, 490], [460, 460], [550, 425], [660, 385]]), [1000, 585], [1020, 575], [1040, 558], [1060, 535], [1080, 517], [1100, 507], [1113, 500]]],
  ['#ff5400', [...pts9([[145, 72], [250, 110], [350, 135], [490, 158], [610, 175], [700, 188], [790, 192], [850, 207], [970, 205], [1090, 200], [1270, 200]]), ...pts10([[100, 605], [160, 590], [220, 563], [280, 545], [340, 525], [400, 500], [460, 478], [550, 445], [660, 412]]), [1000, 594], [1020, 585], [1040, 572], [1060, 552], [1080, 533], [1100, 522], [1113, 516]]],
  ['#ff2c00', [...pts9([[145, 76], [250, 125], [350, 140], [490, 160], [610, 172], [700, 188], [790, 195], [850, 208], [970, 205], [1090, 200], [1270, 200]]), ...pts10([[100, 605], [160, 592], [220, 570], [280, 552], [340, 535], [400, 512], [460, 490], [550, 465], [660, 432]]), [1000, 602], [1020, 594], [1040, 582], [1060, 566], [1080, 548], [1100, 538], [1113, 532]]],
  ['#ff0000', [...pts9([[145, 135], [300, 150], [400, 165], [550, 175], [640, 185], [700, 195], [790, 200], [850, 212], [970, 210], [1090, 202], [1270, 200]]), ...pts10([[100, 607], [160, 597], [220, 580], [280, 563], [340, 545], [400, 525], [460, 510], [550, 485], [660, 458]]), [1000, 611], [1020, 604], [1040, 593], [1060, 578], [1080, 562], [1100, 552], [1113, 544]]],
];

const FLAGS = [['1.36750', 373, '#ffff00'], ['1.36745', 379, '#ff0000'], ['1.36708', 412, '#ffdd00'], ['1.36670', 449, '#ffb400'], ['1.36639', 478, '#ff9400'], ['1.36616', 499, '#ff7400'], ['1.36597', 517, '#ff5400'], ['1.36581', 532, '#ff2c00'], ['1.36567', 545, '#ff0000']];
const LEG = [['1.36750', '#ffff00'], ['1.36708', '#ffdd00'], ['1.36670', '#ffb400'], ['1.36639', '#ff9400'], ['1.36616', '#ff7400'], ['1.36597', '#ff5400'], ['1.36581', '#ff2c00'], ['1.36567', '#ff0000']];

const Chart = () => (
  <ChartSvg width="821" height="686" viewBox="350 204 821 686">
    <g stroke="#8c8c8c" strokeDasharray="1 3" shapeRendering="crispEdges">
      {Array.from({ length: 18 }, (_, i) => <line key={i} x1={433.5 + 40 * i} x2={433.5 + 40 * i} y1="205" y2="875" />)}
      {GRID_Y.map(y => <line key={y} x1="398" x2="1122" y1={y} y2={y} />)}
    </g>
    {RIBBON.map(([c, p]) => <polyline key={c} points={p.map(q => q.join(',')).join(' ')} fill="none" stroke={c} strokeWidth="1" shapeRendering="crispEdges" />)}
    {CANDLES.map(([k, wt, bt, bb, wb], i) => {
      const x = 403.5 + i * 10;
      return (
        <g key={i} shapeRendering="crispEdges">
          <line x1={x} x2={x} y1={wt} y2={wb} stroke="#fff" />
          {k === 'w'
            ? <rect x={x - 2.5} y={bt} width="5" height={Math.max(bb - bt, 1.5)} fill="#fff" />
            : <rect x={x - 2} y={bt} width="4" height={bb - bt} fill={k === 'b' ? '#0000ff' : '#ff0000'} stroke="#fff" />}
        </g>
      );
    })}
    <g stroke="#f00" shapeRendering="crispEdges">
      <line x1="397.500" x2="397.500" y1="204" y2="875" />
      <line x1="1123.500" x2="1123.500" y1="204" y2="875" />
      <line x1="350" x2="1171" y1="875.500" y2="875.500" />
      {GRID_Y.map(y => <g key={y}><line x1="393" x2="397" y1={y} y2={y} /><line x1="1124" x2="1128" y1={y} y2={y} /></g>)}
    </g>
    {GRID_Y.map((y, i) => PRICES[i] && <g key={y} fill="#e8edf5"><text x="353" y={y + 4}>{PRICES[i]}</text><text x="1130" y={y + 4}>{PRICES[i]}</text></g>)}
    <text x="1130" y="425" fill="#e8edf5">1.36700</text>
    {FLAGS.map(([t, y, c]) => (
      <g key={t}>
        <polygon points={`351,${y - 6} 390,${y - 6} 396,${y} 390,${y + 6} 351,${y + 6}`} fill={c} />
        <text x="353" y={y + 4} fill="#5a3a10">{t}</text>
        <polygon points={`1125,${y} 1131,${y - 6} 1171,${y - 6} 1171,${y + 6} 1131,${y + 6}`} fill={c} />
        <text x="1131" y={y + 4} fill="#5a3a10">{t}</text>
      </g>
    ))}
    <rect x="351" y="387" width="16" height="11" fill="#e40000" /><text x="353" y="396" fill="#5a1010">0s</text>
    <rect x="1153" y="387" width="18" height="11" fill="#e40000" /><text x="1157" y="396" fill="#5a1010">0s</text>
    {TIMES.map((t, i) => <text key={t} x={435 + 40 * i} y="888" fill="#eee" fontWeight="bold">{t}</text>)}
  </ChartSvg>
);

const OrderDoc = ({ label, kind }) => {
  const tone = { STP: ['#e6e8ec', '#6b7d91', '#66788c'], LMT: ['#6a6a6a', '#6f2a48', '#6f2a48'], STL: ['#e8ebec', '#2f8f55', '#2f8f55'], BRK: ['#e8e8ee', '#7d55b5', '#7d55b5'] }[kind];
  return (
    <svg width="32" height="34" viewBox="0 0 32 34">
      <path d="M4 1h24v29H1V4z" fill="#c9ccd2" stroke="#8a8d94" transform="translate(2 3)" />
      <path d="M4 1h24v29H1V4z" fill={tone[0]} stroke="#8a8d94" />
      <rect x="2" y={kind === 'BRK' ? 19 : 11} width="26" height="10" fill={tone[1]} />
      <path d="M22 4v6M19 7h6M8 24v6M5 27h6" stroke={tone[2]} strokeWidth="1.4" />
      <text x="5" y={kind === 'BRK' ? 28 : 20} fill="#e8e8e8" style={{ fontSize: 10, fontFamily: 'Liberation Sans' }}>{label}</text>
    </svg>
  );
};

const SectionNotch = () => (
  <svg width="50" height="10" viewBox="0 0 50 10"><path d="M0 1h5l6 6h25l6-6h8" fill="none" stroke="#aca899" /><path d="M0 2h5l6 6h25l6-6h8" fill="none" stroke="#fff" /><path d="M19 5l4-4 4 4z" fill="#aca899" /></svg>
);

const Select = ({ w, t }) => <Field $w={w} $h={22}><FieldText>{t}</FieldText><Drop /></Field>;

export default function App() {
  return (
    <Win>
      <GlobalStyle />
      <TitleBar>
        <svg width="16" height="18" viewBox="0 0 16 18"><path d="M13 3A7 7 0 0 0 3 14" fill="none" stroke="#3bad4b" strokeWidth="3" /><path d="M3 14a7 7 0 0 0 10 1" fill="none" stroke="#3a7fd5" strokeWidth="3" /><path d="M14 3l-4-1" stroke="#f08a1e" strokeWidth="3" /></svg>
        <TitleText>MultiCharts LMAX - 4-FX workspace - [EUR/USD - 1 Minute - LMAX]</TitleText>
        <CapBtn><svg width="11" height="11" viewBox="0 0 11 11"><rect x="1" y="7" width="6" height="3" fill="#fff" /></svg></CapBtn>
        <CapBtn><svg width="11" height="11" viewBox="0 0 11 11"><rect x=".5" y="1" width="10" height="9" fill="none" stroke="#fff" /><rect x=".5" y="1" width="10" height="2" fill="#fff" /></svg></CapBtn>
        <CapBtn $red><svg width="11" height="11" viewBox="0 0 11 11"><path d="M1 1l9 9M10 1l-9 9" stroke="#fff" strokeWidth="2" /></svg></CapBtn>
      </TitleBar>
      <Body>
        <MenuBar>
          <svg width="14" height="16" viewBox="0 0 14 16"><path d="M1 1h9l3 3v11H1z" fill="#dfe9f5" stroke="#46688f" /><path d="M5 4v8M9 6v7" stroke="#46688f" strokeWidth="2" /></svg>
          <MenuItem $ml={8}>File</MenuItem>
          <MenuItem $ml={15}>View</MenuItem>
          <MenuItem $ml={14}>Insert</MenuItem>
          <MenuItem $ml={16}>Format</MenuItem>
          <MenuItem $ml={15}>Window</MenuItem>
          <MenuItem $ml={15}>Help</MenuItem>
          <MdiBtns>
            <MdiBtn><svg width="13" height="13" viewBox="0 0 13 13"><path d="M8 7v4H1V5h4M6 7l5-5M8 2h3v3" fill="none" stroke="#555" /></svg></MdiBtn>
            <MdiBtn><svg width="9" height="9" viewBox="0 0 9 9"><rect x="1" y="6" width="6" height="2" fill="#444" /></svg></MdiBtn>
            <MdiBtn><svg width="11" height="11" viewBox="0 0 11 11"><path d="M3 3V1h7v5H8M1 3h7v7H1z" fill="none" stroke="#444" /></svg></MdiBtn>
            <MdiBtn><svg width="9" height="9" viewBox="0 0 9 9"><path d="M1 1l7 7M8 1l-7 7" stroke="#444" strokeWidth="2" /></svg></MdiBtn>
          </MdiBtns>
        </MenuBar>
        <Toolbar items={tb1} />
        <Toolbar items={tb2}>
          <SymbolCombo><FieldText>Type a symbol/interval</FieldText><DropBtn><Chev /></DropBtn></SymbolCombo>
          <SymbolBtn>
            <svg width="18" height="18" viewBox="0 0 18 18"><circle cx="9" cy="9" r="8" fill="#4c9ad8" stroke="#e6a23c" strokeWidth="1.500" /><path d="M5 13l3-5 5-3-3 5z" fill="#fff" /></svg>
            <Caret />
          </SymbolBtn>
        </Toolbar>

        <TradeDock>
          <Strip><StripClose>×</StripClose><StripLabel>Trade</StripLabel></Strip>
          <TradeMain>
            <TabRow $h={21}><LmaxTab><Led />LMAX</LmaxTab></TabRow>
            <TradePanel>
              <Field $w={117}><FieldText>EUR/USD</FieldText><Magnifier />&nbsp;</Field>
              <Field $w={72} $ml={7}><FieldText>Limit</FieldText><Drop /></Field>
              <Field $w={89} $ml={8}><FieldText>1</FieldText><CalcIcon /><Spin /></Field>
              <Field $w={72} $ml={8}><FieldText>&nbsp;1.36900</FieldText><Spin /></Field>
              <LastPrice>1.36749<LastPriceTail><svg width="5" height="8" viewBox="0 0 5 8"><path d="M0 0l5 4-5 4z" /></svg></LastPriceTail></LastPrice>
              <Field $w={101} $ml={7}><FieldText>764313884</FieldText><Drop /></Field>
              <Field $w={56} $ml={7}><FieldText>GTC</FieldText><Drop /></Field>
              <SideBtn $w={64} $h={35} $ml={17} $mt={-4}>Buy LMT<SideQty>1</SideQty></SideBtn>
              <SideBtn $sell $w={64} $h={35} $ml={7} $mt={-4}>Sell LMT<SideQty>1</SideQty></SideBtn>
            </TradePanel>
          </TradeMain>
        </TradeDock>

        <Workspace>
          <DomPanel>
            <DomHead>Depth Of Market<StripClose>×</StripClose></DomHead>
            <DomRow>
              <DomContent>
                <DomTop>
                  <ConnBtn><Led /><ConnDivider><Caret /></ConnDivider></ConnBtn>
                  <Field $w={79} $h={22} $ml={6}><FieldText>EUR/USD</FieldText><Magnifier />&nbsp;</Field>
                  <Field $w={113} $h={22} $ml={5}><FieldText>764313884</FieldText><Drop /></Field>
                </DomTop>
                <DomTable>
                  <DomHeader><DomHeaderCell $first>Bid</DomHeaderCell><DomHeaderCell>Price</DomHeaderCell><DomHeaderCell>Ask</DomHeaderCell></DomHeader>
                  {domRows.map(p => {
                    const a = ASKS[p]; const b = BIDS[p];
                    const priceBg = p === 1.36757 ? '#fff' : p === 1.36749 ? '#d9d900' : '#808080';
                    return (
                      <DomLine key={p}>
                        <DomCell $first $bg={b ? '#3366ff' : '#15317c'} $fg={b && b[1]}>{b && b[0]}</DomCell>
                        <DomCell $bg={priceBg}>{p.toFixed(5)}</DomCell>
                        <DomCell $bg={a ? '#ff0000' : '#800000'} $fg={a && a[1]}>{a && a[0]}</DomCell>
                      </DomLine>
                    );
                  })}
                </DomTable>
                <Tray>
                  <TrayLine width="300" height="36" viewBox="0 0 300 36">
                    <path d="M3 31.500H30V6.500H269V31.500H298" fill="none" stroke="#aca899" />
                    <path d="M3 32.500H29" fill="none" stroke="#fff" />
                    <path d="M149 1l-4 3h8zM149 9l-4-3h8z" fill="#9c9a88" />
                  </TrayLine>
                  <TrayClose $left={-26}><XMark c="#bbb8a6" /></TrayClose>
                  <TrayClose $left={247}><XMark c="#444" /></TrayClose>
                  <SideBtn $w={66} $h={44} $mt={1}>Buy Mkt<SideQty>1</SideQty></SideBtn>
                  <PnlBox><PnlValue>$ -1.20</PnlValue><PnlBar>+1</PnlBar></PnlBox>
                  <SideBtn $sell $w={66} $h={44} $mt={1}>Sell Mkt<SideQty>1</SideQty></SideBtn>
                </Tray>
                <ActionRow>
                  <ActionBtn $w={66}>Cancel All</ActionBtn>
                  <ActionBtn $w={71} $green>Close</ActionBtn>
                  <ActionBtn $w={66}>Reverse</ActionBtn>
                </ActionRow>
                <OrderRow>
                  <Field $w={80} $h={23}><FieldText>1</FieldText><CalcIcon /><Spin /></Field>
                  <Field $w={51} $h={23} $ml={5}><FieldText>DAY</FieldText><Drop /></Field>
                  <Field $w={80} $h={23} $ml={5} $off><FieldText>11/10/2011</FieldText><Drop off /></Field>
                </OrderRow>
                <SectionTitle $mt={8}>Place Order<SectionRule /><SectionNotch /></SectionTitle>
                <OrderBox $h={68} $mt={12}>
                  <OrderDoc label="STP" kind="STP" />
                  <OrderDoc label="LMT" kind="LMT" />
                  <OrderDoc label="STL" kind="STL" />
                  <OrderDoc label="BRK" kind="BRK" />
                  <MoreBtn><svg width="7" height="4" viewBox="0 0 7 4"><path d="M0 0h7L3.500 4z" fill="#55688f" /></svg></MoreBtn>
                </OrderBox>
                <SectionTitle $mt={7}>Exit Strategy<SectionRule /><SectionNotch /></SectionTitle>
                <OrderBox $h={40} $mt={12} />
              </DomContent>
              <VScrollBar>
                <ScrollBtn $w={15}><Chev d="up" /></ScrollBtn>
                <Thumb $v $h={325}><ThumbGrip $v /></Thumb>
                <Fill />
                <ScrollBtn $w={15}><Chev /></ScrollBtn>
              </VScrollBar>
            </DomRow>
            <HScrollBar $w={324}>
              <ScrollBtn><Chev d="left" /></ScrollBtn>
              <Thumb $grow><ThumbGrip /></Thumb>
              <ScrollBtn><Chev d="right" /></ScrollBtn>
            </HScrollBar>
          </DomPanel>

          <ChartCol>
            <WsTabs>
              <WsTab $w={144} $pl={15}>1-Commodities workspace</WsTab>
              <WsTab $w={112} $pl={15}>2-Rates workspace</WsTab>
              <WsTab $w={121} $pl={14}>3-Indexes workspace</WsTab>
              <WsTab $w={110} $pl={14} $on>4-FX workspace</WsTab>
              <WsNav>
                {['M2 1v8M9 1L3 5l6 4z', 'M8 1L2 5l6 4z', 'M2 1l6 4-6 4z', 'M8 1v8M1 1l6 4-6 4z'].map(d => <svg key={d} width="10" height="10" viewBox="0 0 10 10"><path d={d} fill="#6e6c5c" stroke="#6e6c5c" /></svg>)}
              </WsNav>
            </WsTabs>
            <ChartFrame>
              <Chart />
              <Legend>
                <LegendLine>
                  <LegendBox $gray $w={32} $m="0 7px 0 0">SA<TinyDrop s={9} /></LegendBox>
                  <LegendText $w={50}>EUR/USD</LegendText>
                  <LegendBox $w={14} $m="0 12px 0 0">I<TinyDrop /></LegendBox>
                  <LegendText $w={47}>1 Minute</LegendText>
                  <LegendBox $w={17} $m="0 7px 0 0">R<TinyDrop /></LegendBox>
                  <LegendText $w={59}>A=1.36753</LegendText>
                  <LegendText $w={58}>H=1.36757</LegendText>
                  <LegendText $w={57}>L=1.35740</LegendText>
                  <LegendText $c="#00ff00" $w={72}>Last=1.36757</LegendText>
                  <LegendText $c="#00ff00" $w={51}>+0.00319</LegendText>
                  <LegendText $c="#00ff00" $w={43}>+0.23%</LegendText>
                  <LegendText>V=0</LegendText>
                </LegendLine>
                <LegendLine>
                  <LegendBox $w={14} $m="0 6px 0 0"><svg width="10" height="10" viewBox="0 0 10 10"><path d="M0 0l10 10M10 0L0 10" stroke="#fff" /></svg></LegendBox>
                  <LegendText $w={106}>Mov Avg Exp Ribbon</LegendText>
                  <LegendText $w={40}>(close,</LegendText>
                  <LegendText $w={21}>10,</LegendText>
                  <LegendText $w={14}>1,</LegendText>
                  <LegendText $w={21}>10,</LegendText>
                  <LegendText $w={41}>yellow,</LegendText>
                  <LegendText $w={27}>red)</LegendText>
                  {LEG.map(([t, c]) => <LegendText key={t} $c={c} $w={45}>{t}</LegendText>)}
                </LegendLine>
              </Legend>
              <CollapseIcon><svg width="18" height="11" viewBox="0 0 18 11"><rect x=".5" y=".5" width="7" height="10" fill="#fff" stroke="#000" /><path d="M2 3h4M2 5h4M2 7h4" stroke="#000" /><path d="M9 5.500l4-3v2h4v2h-4v2z" fill="#fff" /></svg></CollapseIcon>
            </ChartFrame>
            <HScrollBar $mt={2}>
              <Thumb $w={107} $ml={695}><ThumbGrip /></Thumb>
              <Fill />
              <ScrollBtn><Chev d="right" /></ScrollBtn>
            </HScrollBar>
          </ChartCol>
        </Workspace>

        <AccountDock>
          <Strip><StripClose>×</StripClose><StripLabel>Account Views</StripLabel></Strip>
          <AccountMain>
            <TabRow $h={23} $pl={2}>
              <AccTab $w={97}>Account Summary</AccTab>
              <AccTab $w={84} $on>Orders History</AccTab>
              <AccTab $w={52}>Positions</AccTab>
              <AccTab $w={66} $ml={1}>Activity Log</AccTab>
              <UpArrow><svg width="11" height="12" viewBox="0 0 11 12"><path d="M5.500 1l5 5H8v5H3V6H.5z" fill="#49a84e" /></svg></UpArrow>
            </TabRow>
            <AccPanel>
              <FilterRow>
                <FilterLabel $w={49} $pl={10}>Profile:</FilterLabel>
                <Select w={112} t="All" />
                <FilterLabel $w={68} $pl={11}>Account:</FilterLabel>
                <Select w={104} t="All" />
                <FilterLabel $w={53} $pl={6}>Source:</FilterLabel>
                <Select w={90} t="All" />
                <FilterLabel $w={74} $pl={8}>Instrument:</FilterLabel>
                <Select w={100} t="All" />
                <FilterLabel $w={45} $pl={7}>State:</FilterLabel>
                <Select w={101} t="All" />
                <FilterLabel $w={46} $pl={9}>From:</FilterLabel>
                <Select w={84} t="11/10/2011" />
                <FilterLabel $w={33} $pl={12}>To:</FilterLabel>
                <Select w={84} t="11/10/2011" />
              </FilterRow>
              <GridWrap>
                <Grid>
                  <GridHead>{HEADS.map(([h, l]) => <HeadCell key={h} $left={l}>{h}</HeadCell>)}</GridHead>
                  {ORDERS.map((r, ri) => (
                    <GridRow key={ri}>
                      {r.map((v, ci) => <GridCell key={ci} $sel={ri === 0 && ci === 0} $bg={cellBg(v)}>{v}</GridCell>)}
                    </GridRow>
                  ))}
                </Grid>
                <VScrollBar $w={16}>
                  <ScrollBtn $h={18}><Chev d="up" /></ScrollBtn>
                  <Thumb $v $h={8} />
                  <Fill />
                  <ScrollBtn $h={18}><Chev /></ScrollBtn>
                </VScrollBar>
              </GridWrap>
              <HScrollBar>
                <ScrollBtn><Chev d="left" /></ScrollBtn>
                <Thumb $w={47}><ThumbGrip /></Thumb>
                <Fill />
                <ScrollBtn $mr={19}><Chev d="right" /></ScrollBtn>
              </HScrollBar>
            </AccPanel>
          </AccountMain>
        </AccountDock>

        <StatusBar>
          <FilterLabel $w={999} $pl={1}>Ready</FilterLabel>
          <StatusCell $w={80}>0 q / 0 s</StatusCell>
          <StatusCell $w={57}>19:02:00</StatusCell>
          <StatusCell $w={31} />
        </StatusBar>
      </Body>
    </Win>
  );
}
